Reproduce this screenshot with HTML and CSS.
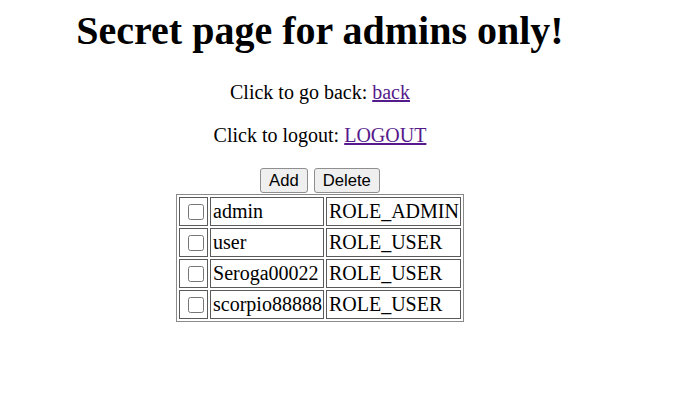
FILE: index.html
```html
<!DOCTYPE html>
<html>
<head>
<meta charset="utf-8">
<title>Admin</title>
<link rel="stylesheet" href="styles.css">
</head>
<body>
<div class="page">
  <h1 class="title">Secret page for admins only!</h1>
  <p class="line">Click to go back: <a class="link" href="#">back</a></p>
  <p class="line">Click to logout: <a class="link" href="#">LOGOUT</a></p>
  <div class="actions">
    <button class="btn" type="button">Add</button>
    <button class="btn" type="button">Delete</button>
  </div>
  <table class="users">
    <tr><td class="check"><input class="box" type="checkbox"></td><td>admin</td><td>ROLE_ADMIN</td></tr>
    <tr><td class="check"><input class="box" type="checkbox"></td><td>user</td><td>ROLE_USER</td></tr>
    <tr><td class="check"><input class="box" type="checkbox"></td><td>Seroga00022</td><td>ROLE_USER</td></tr>
    <tr><td class="check"><input class="box" type="checkbox"></td><td>scorpio88888</td><td>ROLE_USER</td></tr>
  </table>
</div>
</body>
</html>
```

FILE: styles.css
```css
html, body {
  margin: 0;
  padding: 0;
  background: #ffffff;
}

body {
  font-family: "Liberation Serif", "Times New Roman", serif;
  font-size: 20px;
  color: #000000;
}

.page {
  width: 640px;
  padding-top: 8px;
  text-align: center;
}

.title {
  margin: 0 0 27px;
  font-size: 40px;
  line-height: 46px;
  font-weight: bold;
}

.line {
  margin: 0 0 20px;
  line-height: 23px;
}

.link {
  color: #551a8b;
  text-decoration: underline;
}

.actions {
  display: flex;
  justify-content: center;
  gap: 6px;
  margin-top: 21px;
  margin-bottom: 1px;
}

.btn {
  font-family: "Liberation Sans", Arial, sans-serif;
  font-size: 16.67px;
  line-height: 19px;
  padding: 2px 8px;
  border: 1px solid #8f8f8f;
  border-radius: 3px;
  background: #efefef;
  color: #000000;
  margin: 0;
}

.users {
  margin: 0 auto;
  border: 1px solid #8a8a8a;
  border-spacing: 2px;
  text-align: left;
}

.users td {
  border: 1px solid #5a5a5a;
  padding: 2px 1px 2px 2px;
  line-height: 23px;
  white-space: nowrap;
}

.users td.check {
  padding: 2px 1px 2px 2px;
}

.box {
  display: block;
  width: 16px;
  height: 16px;
  margin: 4px 2px 3px 6px;
}
```
